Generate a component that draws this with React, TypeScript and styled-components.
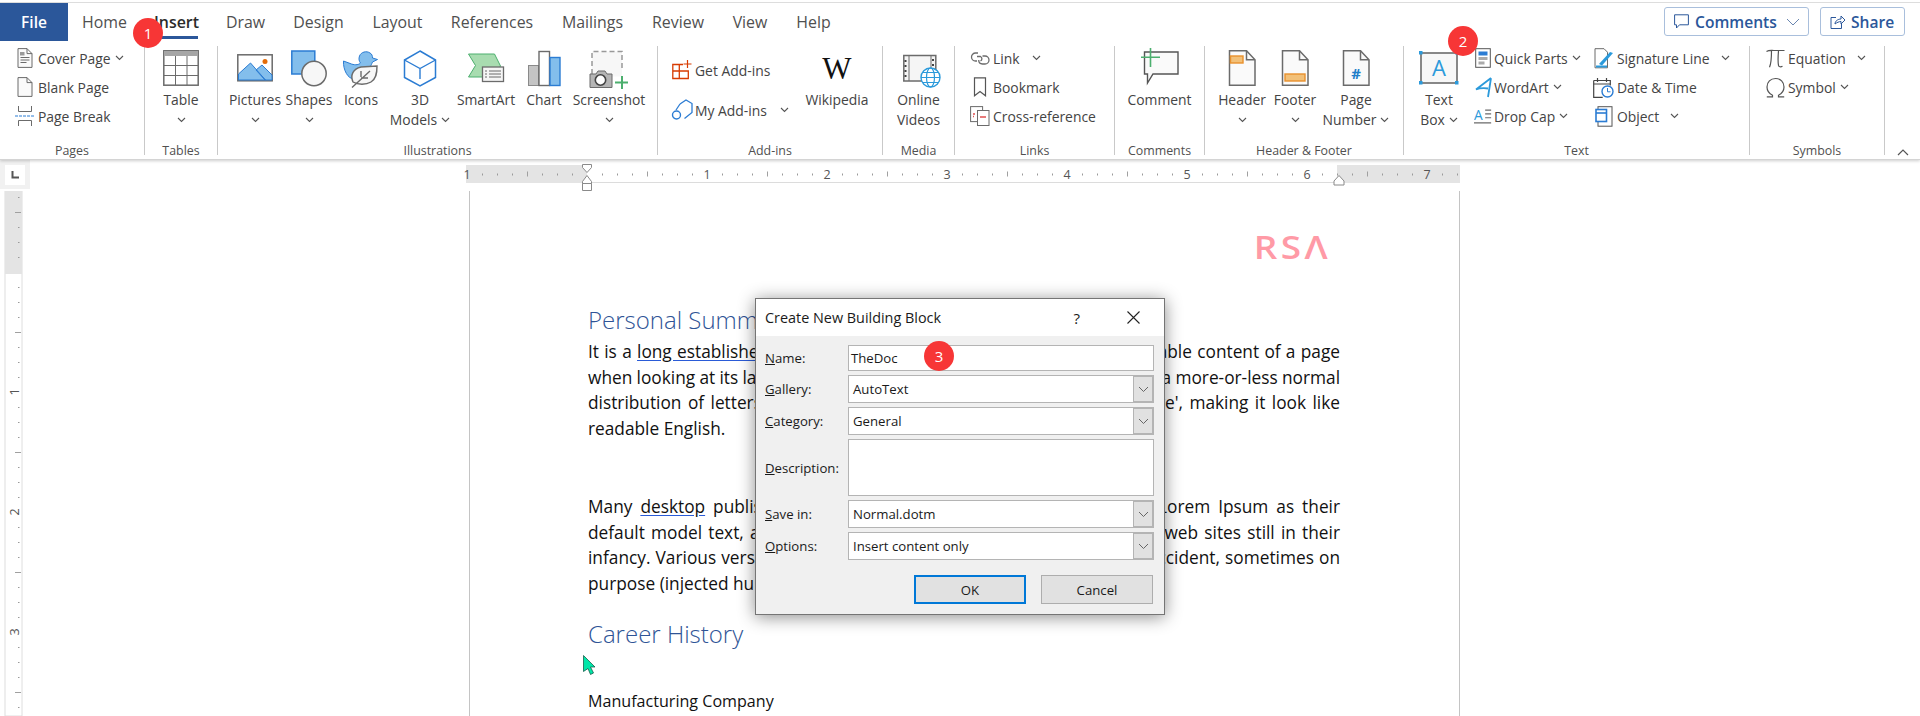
import React from 'react';
import styled, { createGlobalStyle } from 'styled-components';

const GRAY = '#6b6b6b';
const BLUE = '#2b7cd3';
const SKY = '#83beec';
const GREEN = '#4caf6e';
const ORANGE = '#e8912d';

const GlobalStyle = createGlobalStyle`
  html, body {
    margin: 0;
    padding: 0;
    background: #fff;
    overflow: hidden;
  }
  * { box-sizing: border-box; }
`;

const Chevron = ({ ml = 4 }: { ml?: number }) => (
  <ChevronSvg $ml={ml} width="9" height="6" viewBox="0 0 9 6">
    <path d="M1 1l3.5 3.5L8 1" fill="none" stroke="#555" strokeWidth="1.1" />
  </ChevronSvg>
);

const PageSvg = ({ children }: { children?: React.ReactNode }) => (
  <svg width="36" height="36" viewBox="0 0 36 36">
    <path d="M5.5.8h17l8.5 9v25.4H5.5z" fill="#fafafa" stroke={GRAY} strokeWidth="1.5" />
    <path d="M22.5.8v9H31" fill="none" stroke={GRAY} strokeWidth="1.5" />
    {children}
  </svg>
);

const icons: Record<string, React.ReactNode> = {
  cover: (
    <svg width="16" height="20" viewBox="0 0 16 20">
      <path d="M1 .6h9l5 5v13.8H1z" fill="#fafafa" stroke={GRAY} />
      <path d="M10 .6v5h5" fill="none" stroke={GRAY} />
      <path d="M3.5 9.5h9M3.5 12h9M3.5 14.5h6" stroke={GRAY} />
      <rect x="3" y="4" width="4.5" height="3.5" fill="#999" />
    </svg>
  ),
  blank: (
    <svg width="16" height="20" viewBox="0 0 16 20">
      <path d="M1 .6h9l5 5v13.8H1z" fill="#fafafa" stroke={GRAY} />
      <path d="M10 .6v5h5" fill="none" stroke={GRAY} />
    </svg>
  ),
  pagebreak: (
    <svg width="20" height="20" viewBox="0 0 20 20">
      <path d="M3.5 0v5.5h13V0M3.5 20v-5.5h13V20" fill="none" stroke={GRAY} />
      <path d="M0 10h20" stroke={BLUE} strokeDasharray="3 1" />
    </svg>
  ),
  table: (
    <svg width="36" height="36" viewBox="0 0 36 36">
      <rect x=".8" y=".8" width="34.4" height="34.4" fill="#fff" stroke={GRAY} strokeWidth="1.5" />
      <rect x="1" y="1" width="34" height="5" fill="#a6a6a6" />
      <path d="M12.5 6v29M24 6v29M1 15.5h34M1 25.5h34" stroke={GRAY} />
    </svg>
  ),
  pictures: (
    <svg width="36" height="36" viewBox="0 0 36 36">
      <rect x=".8" y="4.8" width="34.4" height="26" fill="#fff" stroke={GRAY} strokeWidth="1.5" />
      <path d="M1.5 24l12-11 15 17H1.5zM19 20l6-5 10 10v5h-7z" fill={SKY} stroke={BLUE} />
      <circle cx="28" cy="11.5" r="2.5" fill="#e36c0a" />
    </svg>
  ),
  shapes: (
    <svg width="36" height="37" viewBox="0 0 36 37">
      <rect x=".8" y="1" width="23" height="23" fill={SKY} stroke={BLUE} strokeWidth="1.5" />
      <circle cx="23" cy="23.5" r="12.2" fill="#f7f7f7" stroke={GRAY} strokeWidth="1.5" />
    </svg>
  ),
  duck: (
    <svg width="36" height="38" viewBox="0 0 36 38">
      <path
        d="M.5 11l8 3c4 1.5 8 .5 9-1-1.5-2-2-4-1-7 1.5-4 7-5.5 10.5-3 2 1 2.5 3 2.500 5l5 1.500-5 2.500c-1 2-1 3-2.500 5L11 29C5 29 0 20 .5 11z"
        fill={SKY}
        stroke={BLUE}
      />
      <path d="M10 32c-3-7 0-13 8-15l16-1c0 8-1 13-6 16-5 3-13 3-18 0z" fill="#f7f7f7" stroke={GRAY} strokeWidth="1.4" />
      <path d="M9 37.5L27 21M18 27v-6M18 28h7" fill="none" stroke={GRAY} strokeWidth="1.4" />
    </svg>
  ),
  cube: (
    <svg width="36" height="37" viewBox="0 0 36 37">
      <path d="M18 1l15.5 9v17.5L18 36 2.5 27.5V10z" fill="#fff" stroke={BLUE} strokeWidth="1.5" />
      <path d="M2.5 10L18 18.5 33.5 10M18 18.5V29" fill="none" stroke={BLUE} strokeWidth="1.4" />
    </svg>
  ),
  smartart: (
    <svg width="36" height="34" viewBox="0 0 36 34">
      <path d="M.5 4h26l6 12-6 11H.5l7-11.5z" fill="#a8dcb0" stroke={GREEN} />
      <rect x="14.5" y="17" width="21" height="14.5" fill="#f5f5f5" stroke={GRAY} strokeWidth="1.3" />
      <path d="M17 21h2M21 21h12M17 24h2M21 24h12M17 27h2M21 27h12" stroke={GRAY} />
    </svg>
  ),
  chart: (
    <svg width="36" height="36" viewBox="0 0 36 36">
      <rect x="2.5" y="15.5" width="10" height="20" fill="#c4c4c4" stroke="#8a8a8a" />
      <rect x="13" y="1.5" width="10.5" height="34" fill="#fff" stroke={GRAY} strokeWidth="1.4" />
      <rect x="24" y="7.5" width="10" height="28" fill={SKY} stroke={BLUE} strokeWidth="1.4" />
    </svg>
  ),
  screenshot: (
    <svg width="40" height="38" viewBox="0 0 40 38">
      <rect x="3" y="1.5" width="30" height="25" fill="#f7f7f7" />
      <path d="M3 24V1.5h30V21" fill="none" stroke="#999" strokeWidth="1.5" strokeDasharray="5 3" />
      <path d="M1 24h6l2-3h7l2 3h5v13.5H1z" fill="#b5b5b5" stroke={GRAY} />
      <circle cx="11.5" cy="30" r="5.2" fill="#fff" stroke="#444" strokeWidth="1.6" />
      <path d="M33 26v13M26 32.5h13" stroke={GREEN} strokeWidth="2" />
    </svg>
  ),
  getaddins: (
    <svg width="20" height="20" viewBox="0 0 20 20">
      <path d="M.8 4.5h6.5V11H.8zM.8 11h6.5v7.5H.8zM7.3 11h9v7.5h-9zM7.3 11V4.5H11" fill="#fff" stroke="#d83b01" strokeWidth="1.3" />
      <path d="M15.5 0v8M11.5 4h8" stroke="#d83b01" strokeWidth="1.2" />
    </svg>
  ),
  myaddins: (
    <svg width="22" height="22" viewBox="0 0 22 22">
      <path d="M9 5l6-4 6 3.5v9l-7.5 6" fill="none" stroke={BLUE} strokeWidth="1.3" />
      <path d="M9 5L5 11" stroke={BLUE} strokeWidth="1.3" />
      <circle cx="5.5" cy="16" r="4" fill="#fff" stroke={BLUE} strokeWidth="1.4" />
    </svg>
  ),
  videos: (
    <svg width="40" height="38" viewBox="0 0 40 38">
      <rect x="4.8" y="5.5" width="32" height="25.5" fill="#f5f5f5" stroke={GRAY} strokeWidth="1.5" />
      <path d="M10 6v25M32 6v18" stroke={GRAY} strokeWidth="1" />
      <path d="M6.5 10v18M34 9v10" stroke="#444" strokeWidth="2" strokeDasharray="2 3" />
      <circle cx="31.5" cy="27.5" r="9.5" fill="#fff" stroke="#2b9adb" strokeWidth="1.4" />
      <ellipse cx="31.5" cy="27.5" rx="4" ry="9.5" fill="none" stroke="#2b9adb" strokeWidth="1.2" />
      <path d="M22 27.5h19M23.5 22.5h16M23.5 32.5h16" stroke="#2b9adb" strokeWidth="1.2" />
    </svg>
  ),
  link: (
    <svg width="21" height="16" viewBox="0 0 21 16">
      <path d="M8 3H5.5a4 4 0 0 0 0 8H7M7 6.500h3.500a2.500 2.500 0 0 1 0 4.500M12.500 6H15a4 4 0 0 1 0 8h-2.500a4 4 0 0 1-3.800-4" fill="none" stroke={GRAY} strokeWidth="1.3" />
    </svg>
  ),
  bookmark: (
    <svg width="14" height="20" viewBox="0 0 14 20">
      <path d="M1.5.8h11v18L7 14.5l-5.500 4.300z" fill="#fff" stroke="#555" strokeWidth="1.2" />
    </svg>
  ),
  crossref: (
    <svg width="20" height="20" viewBox="0 0 20 20">
      <rect x=".6" y=".6" width="12" height="15" fill="#fff" stroke={GRAY} />
      <rect x="7.5" y="4.5" width="11.5" height="15" fill="#fff" stroke={GRAY} />
      <path d="M3 8h2M3 10.500h1M10 11h6" stroke="#e05050" strokeWidth="1.4" />
    </svg>
  ),
  comment: (
    <svg width="40" height="38" viewBox="0 0 40 38">
      <path d="M4.5 2H38v22H13l-5.500 9v-9h-3z" fill="#fafafa" stroke="#555" strokeWidth="1.4" />
      <path d="M10.5-2v19M1 7.300h19" stroke={GREEN} strokeWidth="1.6" />
    </svg>
  ),
  header: (
    <PageSvg>
      <rect x="6.5" y="6" width="12.5" height="7" fill="#f2c078" stroke={ORANGE} strokeWidth="1.4" />
    </PageSvg>
  ),
  footer: (
    <PageSvg>
      <rect x="8" y="24" width="20" height="7" fill="#f2c078" stroke={ORANGE} strokeWidth="1.4" />
    </PageSvg>
  ),
  pagenumber: (
    <PageSvg>
      <text x="18" y="29" textAnchor="middle" fontFamily="'Open Sans', sans-serif" fontWeight="700" fontSize="15" fill="#1f7ec9">#</text>
    </PageSvg>
  ),
  textbox: (
    <svg width="42" height="36" viewBox="0 0 42 36">
      <rect x="3" y="3" width="36" height="30" fill="#f7f7f7" stroke={GRAY} strokeWidth="1.6" />
      <rect x="1" y="1" width="3.5" height="3.5" fill="#2b9adb" />
      <rect x="37" y="1" width="3.5" height="3.5" fill="#2b9adb" />
      <rect x="1" y="31" width="3.5" height="3.5" fill="#2b9adb" />
      <rect x="37" y="31" width="3.5" height="3.5" fill="#2b9adb" />
      <text x="21" y="26" textAnchor="middle" fontFamily="'Open Sans', sans-serif" fontSize="22" fill="#2b9adb">A</text>
    </svg>
  ),
  quickparts: (
    <svg width="16" height="20" viewBox="0 0 16 20">
      <rect x=".7" y=".7" width="14.6" height="18.6" fill="#fff" stroke="#555" />
      <rect x="3.5" y="3.5" width="9" height="4" fill={BLUE} />
      <rect x="3.5" y="9" width="9" height="3" fill="#aaa" />
      <rect x="3.5" y="13.5" width="6" height="3" fill="#aaa" />
    </svg>
  ),
  wordart: (
    <svg width="17" height="21" viewBox="0 0 17 21">
      <path d="M16 1L1 12.500c4-1.500 8-1.500 12-1M16 1l-3 19" fill="none" stroke="#2b9adb" strokeWidth="1.8" />
    </svg>
  ),
  dropcap: (
    <svg width="21" height="19" viewBox="0 0 21 19">
      <text x="0" y="13" fontFamily="'Open Sans', sans-serif" fontSize="16" fill="#2b9adb">A</text>
      <path d="M13 2h7M13 6.500h7M13 11h7M0 17h20" stroke={GRAY} strokeWidth="1.3" />
    </svg>
  ),
  signature: (
    <svg width="20" height="21" viewBox="0 0 20 21">
      <path d="M1 .7h9l3.500 3.500v15.600H1z" fill="#fff" stroke={GRAY} />
      <path d="M5 16L16 4l3 1-11 12.500z" fill="#2b9adb" />
      <path d="M2 18.500h11" stroke="#2b9adb" strokeWidth="2" />
    </svg>
  ),
  datetime: (
    <svg width="21" height="21" viewBox="0 0 21 21">
      <path d="M.7 3.500h16.600v5M.7 3.500v16.800h9" fill="none" stroke="#444" strokeWidth="1.2" />
      <path d="M.7 7h16.600M4.500 1v4M13.500 1v4" stroke="#444" strokeWidth="1.2" />
      <circle cx="14.5" cy="14.5" r="5.5" fill="#fff" stroke={BLUE} strokeWidth="1.4" />
      <path d="M14.5 11v3.800h3" fill="none" stroke={BLUE} />
    </svg>
  ),
  object: (
    <svg width="18" height="21" viewBox="0 0 18 21">
      <rect x="3" y=".7" width="14" height="19.5" fill="#fff" stroke="#555" />
      <rect x="1" y="3.5" width="10.5" height="12" fill="#fff" stroke={BLUE} strokeWidth="1.6" />
      <path d="M1 7h10.500" stroke={BLUE} strokeWidth="1.6" />
    </svg>
  ),
  equation: (
    <svg width="19" height="19" viewBox="0 0 19 19">
      <path d="M.5 2.500C3 1 5 1.500 8 1.500h10.500M5.500 1.800c0 6 0 12-2 16.500M12.500 1.800c-.5 6-.5 12 0 14.500.3 1.500 2 2 4 1" fill="none" stroke="#555" strokeWidth="1.2" />
    </svg>
  ),
  symbol: (
    <svg width="19" height="21" viewBox="0 0 19 21">
      <path d="M.8 19.800h5.700v-1.500C3 16.500 1 13.500 1 10c0-5 3.500-8.500 8.500-8.500S18 5 18 10c0 3.500-2 6.500-5.500 8.300v1.500h5.700" fill="none" stroke="#555" strokeWidth="1.2" />
    </svg>
  ),
};

const Root = styled.div`
  position: relative;
  width: 1920px;
  height: 716px;
  overflow: hidden;
  background: #fff;
  font-family: 'Open Sans', 'Noto Sans', sans-serif;
`;

const TopStrip = styled.div`
  height: 3px;
  background: #fff;
  border-bottom: 1px solid #dddddd;
`;

const Ribbon = styled.header`
  position: relative;
  z-index: 2;
  height: 160px;
  background: #fff;
  border-bottom: 1px solid #d4d4d4;
  box-shadow: 0 1px 3px rgba(0, 0, 0, 0.2);
`;

const TabRow = styled.nav`
  display: flex;
  align-items: flex-start;
  height: 38px;
`;

const FileTab = styled.div`
  width: 68px;
  height: 38px;
  margin-right: 14px;
  background: #2b579a;
  color: #fff;
  font-size: 15.5px;
  font-weight: 600;
  line-height: 38px;
  text-align: center;
`;

const Tab = styled.div<{ $active?: boolean; $w: number }>`
  display: flex;
  justify-content: center;
  width: ${(p) => p.$w}px;
  margin-right: 28px;
  height: 36px;
  color: ${(p) => (p.$active ? '#2b2b2b' : '#505050')};
  font-size: 15.9px;
  font-weight: ${(p) => (p.$active ? 600 : 400)};
  line-height: 38px;
  white-space: nowrap;
  border-bottom: ${(p) => (p.$active ? '3px solid #2b579a' : 'none')};
`;

const TabActions = styled.div`
  display: flex;
  gap: 11px;
  margin: 4px 15px 0 auto;
`;

const ActionButton = styled.div<{ $w: number }>`
  display: flex;
  align-items: center;
  gap: 6px;
  width: ${(p) => p.$w}px;
  height: 29px;
  padding-left: 9px;
  border: 1px solid #a9bfdc;
  border-radius: 3px;
  color: #2b579a;
  font-size: 15.6px;
  font-weight: 600;
`;

const ActionCaret = styled.svg`
  margin-left: auto;
  margin-right: 8px;
`;

const GroupRow = styled.div`
  display: flex;
  align-items: flex-start;
  height: 118px;
  padding-top: 5px;
`;

const Group = styled.section<{ $w: number }>`
  display: flex;
  flex-direction: column;
  flex: none;
  width: ${(p) => p.$w}px;
  height: 109px;
  border-right: 1px solid #c9c9c9;
`;

const GroupBody = styled.div<{ $pad?: number }>`
  display: flex;
  height: 94px;
  padding-left: ${(p) => p.$pad ?? 0}px;
`;

const GroupLabel = styled.div`
  height: 15px;
  color: #505050;
  font-size: 12.4px;
  line-height: 22px;
  text-align: center;
`;

const Large = styled.div<{ $w: number }>`
  display: flex;
  flex-direction: column;
  align-items: center;
  flex: none;
  width: ${(p) => p.$w}px;
  color: #444;
  font-size: 13.9px;
  line-height: 20px;
  white-space: nowrap;
`;

const LargeIcon = styled.div`
  display: flex;
  justify-content: center;
  align-items: flex-start;
  height: 36px;
  margin: 4px 0;
  svg { flex: none; overflow: visible; }
`;

const LargeLine = styled.div`
  display: flex;
  align-items: center;
  height: 20px;
`;

const ChevronSvg = styled.svg<{ $ml: number }>`
  flex: none;
  margin-left: ${(p) => p.$ml}px;
`;

const RowStack = styled.div<{ $w: number; $gap?: number; $top?: number }>`
  display: flex;
  flex-direction: column;
  flex: none;
  gap: ${(p) => p.$gap ?? 3}px;
  width: ${(p) => p.$w}px;
  margin-top: -1px;
  padding-top: ${(p) => p.$top ?? 0}px;
`;

const SmallRow = styled.div`
  display: flex;
  align-items: center;
  height: 26px;
  color: #444;
  font-size: 13.9px;
  white-space: nowrap;
`;

const SmallIcon = styled.span<{ $w?: number }>`
  display: flex;
  justify-content: center;
  align-items: center;
  flex: none;
  width: ${(p) => p.$w ?? 22}px;
  margin-right: 2px;
`;

const Wiki = styled.div`
  height: 36px;
  margin: 5px 0 3px;
  color: #111;
  font-family: 'Liberation Serif', serif;
  font-size: 31px;
  line-height: 36px;
`;

const Collapse = styled.svg`
  align-self: flex-end;
  flex: none;
  margin: 0 0 3px 12px;
`;

const RulerRow = styled.div`
  display: flex;
  height: 31px;
`;

const Corner = styled.div`
  display: flex;
  align-items: center;
  justify-content: center;
  width: 30px;
  height: 29px;
  background: #f1f1f1;
`;

const CornerBox = styled.div`
  display: flex;
  align-items: center;
  justify-content: center;
  width: 20px;
  height: 20px;
  background: #fff;
`;

const HorizontalRuler = styled.svg`
  flex: none;
  margin-left: 432px;
`;

const Workspace = styled.div`
  display: flex;
  height: 525px;
`;

const VerticalRuler = styled.svg`
  flex: none;
  margin-left: 4px;
`;

const Page = styled.main`
  flex: none;
  width: 991px;
  margin-left: 441px;
  padding: 0 119px 0 118px;
  border-left: 1px solid #c4c4c4;
  border-right: 1px solid #c4c4c4;
  color: #111;
  font-size: 17.3px;
  line-height: 25.5px;
`;

const LogoRow = styled.div`
  height: 73px;
  padding: 35px 8px 0 0;
  color: #ff9aa6;
  font-size: 33px;
  font-weight: 600;
  letter-spacing: 3px;
  line-height: 42px;
  text-align: right;
  transform: scaleX(1.12);
  transform-origin: 752px 0;
`;

const Heading = styled.h2<{ $mt: number }>`
  margin: ${(p) => p.$mt}px 0 0;
  color: #2f5496;
  font-size: 24px;
  font-weight: 300;
  line-height: 32px;
`;

const Paragraph = styled.div<{ $mt: number }>`
  margin-top: ${(p) => p.$mt}px;
`;

const Line = styled.div<{ $last?: boolean }>`
  height: 25.5px;
  text-align: justify;
  text-align-last: ${(p) => (p.$last ? 'left' : 'justify')};
  white-space: nowrap;
  word-spacing: ${(p) => (p.$last ? 0 : -2.5)}px;
`;

const Proofed = styled.span`
  text-decoration: underline;
  text-decoration-color: #2a5bd7;
  text-underline-offset: 2px;
`;

const Company = styled.div`
  margin-top: 39px;
  font-size: 16.1px;
  line-height: 24px;
`;

const Dialog = styled.div`
  position: absolute;
  z-index: 3;
  left: 755px;
  top: 298px;
  width: 410px;
  height: 317px;
  border: 1px solid #757575;
  background: #f0f0f0;
  box-shadow: 0 2px 16px rgba(0, 0, 0, 0.45);
  color: #1a1a1a;
  font-size: 13.2px;
`;

const DialogTitle = styled.div`
  display: flex;
  align-items: center;
  height: 37px;
  padding: 0 24px 0 9px;
  background: #fff;
  font-size: 14.4px;
`;

const Help = styled.span`
  margin-left: auto;
  margin-right: 47px;
  font-size: 15px;
`;

const Form = styled.div`
  display: flex;
  flex-direction: column;
  gap: 4px;
  padding: 9px 10px 0 9px;
`;

const FormRow = styled.div<{ $h: number }>`
  display: flex;
  align-items: center;
  height: ${(p) => p.$h}px;
`;

const FieldLabel = styled.label`
  flex: none;
  width: 83px;
`;

const Field = styled.div`
  display: flex;
  align-items: center;
  flex: 1;
  height: 100%;
  padding-left: 2px;
  background: #fff;
  border: 1px solid #b4b4b4;
`;

const SelectBox = styled.div`
  display: flex;
  align-items: center;
  flex: 1;
  height: 100%;
  padding-left: 4px;
  background: #fff;
  border: 1px solid #b4b4b4;
`;

const SelectArrow = styled.div`
  display: flex;
  align-items: center;
  justify-content: center;
  flex: none;
  width: 21px;
  height: calc(100% + 2px);
  margin: 0 -1px 0 auto;
  background: #e1e1e1;
  border: 1px solid #b4b4b4;
  border-width: 2px 2px 2px 1px;
`;

const DialogFooter = styled.div`
  display: flex;
  gap: 15px;
  margin-top: 15px;
  padding-left: 158px;
`;

const DialogButton = styled.div<{ $primary?: boolean }>`
  display: flex;
  align-items: center;
  justify-content: center;
  width: 112px;
  height: 29px;
  background: #e1e1e1;
  border: ${(p) => (p.$primary ? '2px solid #0078d7' : '1px solid #adadad')};
`;

const Badge = styled.div<{ $x: number; $y: number }>`
  position: absolute;
  z-index: 4;
  left: ${(p) => p.$x - 15}px;
  top: ${(p) => p.$y - 15}px;
  width: 30px;
  height: 30px;
  border-radius: 50%;
  background: #f73636;
  color: #fff;
  font-size: 15px;
  line-height: 30px;
  text-align: center;
`;

const Cursor = styled.svg`
  position: absolute;
  z-index: 1;
  left: 583px;
  top: 655px;
`;

type BigProps = { w: number; icon: string; lines: string[]; chev?: boolean };

const Big = ({ w, icon, lines, chev }: BigProps) => (
  <Large $w={w}>
    <LargeIcon>{icons[icon]}</LargeIcon>
    <LargeLine>{lines[0]}</LargeLine>
    {lines[1] ? (
      <LargeLine>
        {lines[1]}
        {chev && <Chevron />}
      </LargeLine>
    ) : (
      chev && (
        <LargeLine>
          <Chevron ml={0} />
        </LargeLine>
      )
    )}
  </Large>
);

const Small = ({ icon, text, chev, iw }: { icon: string; text: string; chev?: number; iw?: number }) => (
  <SmallRow>
    <SmallIcon $w={iw}>{icons[icon]}</SmallIcon>
    {text}
    {chev !== undefined && <Chevron ml={chev} />}
  </SmallRow>
);

const TopRuler = () => {
  const ticks: React.ReactNode[] = [];
  // zero of the ruler sits at x=587 on screen, the svg starts at x=462
  for (let i = -8; i <= 58; i++) {
    const x = 125 + i * 15;
    if (x < 8 || x > 996) continue;
    if (i % 8 === 0) continue;
    if (i % 4 === 0) ticks.push(<rect key={i} x={x} y={11.5} width={1} height={5} fill="#a0a0a0" />);
    else ticks.push(<rect key={i} x={x} y={13.5} width={1} height={2} fill="#9a9a9a" />);
  }
  const nums = [-1, 1, 2, 3, 4, 5, 6, 7];
  return (
    <HorizontalRuler width="1000" height="31" viewBox="0 0 1000 31">
      <rect x="4" y="5" width="994" height="18" fill="#fff" />
      <rect x="4" y="5" width="121" height="18" fill="#e4e4e4" />
      <rect x="875" y="5" width="123" height="18" fill="#e4e4e4" />
      <rect x="125" y="22" width="750" height="1" fill="#dcdcdc" />
      {ticks}
      {nums.map((n) => (
        <text key={n} x={125 + n * 120} y="19" textAnchor="middle" fontSize="12.5" fill="#555" fontFamily="'Open Sans', sans-serif">
          {Math.abs(n)}
        </text>
      ))}
      <path d="M120.5 4.5h9v3l-4.500 5-4.500-5zM120.5 21.5l4.500-6 4.500 6v2h-9zM120.5 23.5h9v7h-9z" fill="#fff" stroke="#8a8a8a" />
      <path d="M872 21l5-5.500 5 5.500v4h-10z" fill="#fff" stroke="#8a8a8a" />
    </HorizontalRuler>
  );
};

const SideRuler = () => {
  const ticks: React.ReactNode[] = [];
  for (let i = 0; i < 36; i++) {
    const y = 6 + i * 15;
    const fromZero = i - 5;
    if (fromZero % 8 === 0 && fromZero !== -8) continue;
    if (((fromZero % 4) + 4) % 4 === 0) ticks.push(<rect key={i} x={11} y={y} width={6} height={1} fill="#a0a0a0" />);
    else ticks.push(<rect key={i} x={14} y={y} width={1.5} height={1} fill="#9a9a9a" />);
  }
  return (
    <VerticalRuler width="24" height="525" viewBox="0 0 24 525">
      <rect x="1" y="0" width="17" height="525" fill="#fff" stroke="#dedede" />
      <rect x="1" y="0" width="17" height="83" fill="#e4e4e4" />
      {ticks}
      {[1, 2, 3].map((n) => (
        <text key={n} x="0" y="0" textAnchor="middle" fontSize="12.5" fill="#555" fontFamily="'Open Sans', sans-serif" transform={`translate(14.5 ${81 + n * 120}) rotate(-90)`}>
          {n}
        </text>
      ))}
    </VerticalRuler>
  );
};

const Combo = ({ label, rest, value }: { label: string; rest: string; value: string }) => (
  <FormRow $h={28}>
    <FieldLabel>
      <u>{label}</u>
      {rest}
    </FieldLabel>
    <SelectBox>
      {value}
      <SelectArrow>
        <svg width="11" height="7" viewBox="0 0 11 7">
          <path d="M1 1l4.5 4.5L10 1" fill="none" stroke="#666" />
        </svg>
      </SelectArrow>
    </SelectBox>
  </FormRow>
);

const App = () => {
  return (
    <Root>
      <GlobalStyle />
      <Ribbon>
        <TopStrip />
        <TabRow>
          <FileTab>File</FileTab>
          <Tab $w={45}>Home</Tab>
          <Tab $w={43} $active>Insert</Tab>
          <Tab $w={39}>Draw</Tab>
          <Tab $w={51}>Design</Tab>
          <Tab $w={51}>Layout</Tab>
          <Tab $w={82}>References</Tab>
          <Tab $w={63}>Mailings</Tab>
          <Tab $w={52}>Review</Tab>
          <Tab $w={36}>View</Tab>
          <Tab $w={35}>Help</Tab>
          <TabActions>
            <ActionButton $w={145}>
              <svg width="15" height="15" viewBox="0 0 15 15">
                <path d="M.6.8h13.8v10H5.5L2.500 14v-3.200H.6z" fill="none" stroke="#2b579a" />
              </svg>
              Comments
              <ActionCaret width="14" height="8" viewBox="0 0 14 8">
                <path d="M1 1l6 6 6-6" fill="none" stroke="#6a86b0" />
              </ActionCaret>
            </ActionButton>
            <ActionButton $w={85}>
              <svg width="15" height="15" viewBox="0 0 15 15">
                <path d="M6 3.5H1v11h10.500V10" fill="none" stroke="#2b579a" />
                <path d="M5 10c0-3 3-5 6-5V2l4 4-4 4V7.500c-2 0-4 1-6 2.500z" fill="none" stroke="#2b579a" />
              </svg>
              Share
            </ActionButton>
          </TabActions>
        </TabRow>
        <GroupRow>
          <Group $w={145}>
            <GroupBody $pad={14}>
              <RowStack $w={130}>
                <Small icon="cover" text="Cover Page" chev={4} />
                <Small icon="blank" text="Blank Page" />
                <Small icon="pagebreak" text="Page Break" />
              </RowStack>
            </GroupBody>
            <GroupLabel>Pages</GroupLabel>
          </Group>
          <Group $w={73}>
            <GroupBody>
              <Big w={72} icon="table" lines={['Table']} chev />
            </GroupBody>
            <GroupLabel>Tables</GroupLabel>
          </Group>
          <Group $w={440}>
            <GroupBody $pad={10}>
              <Big w={54} icon="pictures" lines={['Pictures']} chev />
              <Big w={54} icon="shapes" lines={['Shapes']} chev />
              <Big w={50} icon="duck" lines={['Icons']} />
              <Big w={68} icon="cube" lines={['3D', 'Models']} chev />
              <Big w={64} icon="smartart" lines={['SmartArt']} />
              <Big w={52} icon="chart" lines={['Chart']} />
              <Big w={78} icon="screenshot" lines={['Screenshot']} chev />
            </GroupBody>
            <GroupLabel>Illustrations</GroupLabel>
          </Group>
          <Group $w={225}>
            <GroupBody $pad={13}>
              <RowStack $w={129} $gap={14} $top={12}>
                <Small icon="getaddins" text="Get Add-ins" />
                <Small icon="myaddins" text="My Add-ins" chev={13} />
              </RowStack>
              <Large $w={74}>
                <Wiki>W</Wiki>
                <LargeLine>Wikipedia</LargeLine>
              </Large>
            </GroupBody>
            <GroupLabel>Add-ins</GroupLabel>
          </Group>
          <Group $w={72}>
            <GroupBody>
              <Big w={71} icon="videos" lines={['Online', 'Videos']} />
            </GroupBody>
            <GroupLabel>Media</GroupLabel>
          </Group>
          <Group $w={160}>
            <GroupBody $pad={14}>
              <RowStack $w={144}>
                <Small icon="link" text="Link" chev={12} />
                <Small icon="bookmark" text="Bookmark" />
                <Small icon="crossref" text="Cross-reference" />
              </RowStack>
            </GroupBody>
            <GroupLabel>Links</GroupLabel>
          </Group>
          <Group $w={90}>
            <GroupBody>
              <Big w={89} icon="comment" lines={['Comment']} />
            </GroupBody>
            <GroupLabel>Comments</GroupLabel>
          </Group>
          <Group $w={199}>
            <GroupBody $pad={9}>
              <Big w={56} icon="header" lines={['Header']} chev />
              <Big w={50} icon="footer" lines={['Footer']} chev />
              <Big w={72} icon="pagenumber" lines={['Page', 'Number']} chev />
            </GroupBody>
            <GroupLabel>Header &amp; Footer</GroupLabel>
          </Group>
          <Group $w={346}>
            <GroupBody>
              <Big w={70} icon="textbox" lines={['Text', 'Box']} chev />
              <RowStack $w={118}>
                <Small icon="quickparts" iw={18} text="Quick Parts" chev={4} />
                <Small icon="wordart" iw={18} text="WordArt" chev={4} />
                <Small icon="dropcap" iw={18} text="Drop Cap" chev={4} />
              </RowStack>
              <RowStack $w={150}>
                <Small icon="signature" iw={23} text="Signature Line" chev={11} />
                <Small icon="datetime" iw={23} text="Date & Time" />
                <Small icon="object" iw={23} text="Object" chev={11} />
              </RowStack>
            </GroupBody>
            <GroupLabel>Text</GroupLabel>
          </Group>
          <Group $w={135}>
            <GroupBody $pad={14}>
              <RowStack $w={118}>
                <Small icon="equation" text="Equation" chev={11} />
                <Small icon="symbol" text="Symbol" chev={4} />
              </RowStack>
            </GroupBody>
            <GroupLabel>Symbols</GroupLabel>
          </Group>
          <Collapse width="12" height="8" viewBox="0 0 12 8">
            <path d="M1 7l5-5 5 5" fill="none" stroke="#555" strokeWidth="1.2" />
          </Collapse>
        </GroupRow>
      </Ribbon>

      <RulerRow>
        <Corner>
          <CornerBox>
            <svg width="8" height="8" viewBox="0 0 8 8">
              <path d="M1.5 0v6.500H8" fill="none" stroke="#555" strokeWidth="2" />
            </svg>
          </CornerBox>
        </Corner>
        <TopRuler />
      </RulerRow>

      <Workspace>
        <SideRuler />
        <Page>
          <LogoRow>RSΛ</LogoRow>
          <Heading $mt={40}>Personal Summary</Heading>
          <Paragraph $mt={3}>
            <Line>It is a <Proofed>long established</Proofed> fact that a reader will be distracted by the readable content of a page</Line>
            <Line>when looking at its layout. The point of using Lorem Ipsum is that it has a more-or-less normal</Line>
            <Line>distribution of letters, as opposed to using 'Content here, content here', making it look like</Line>
            <Line $last>readable English.</Line>
          </Paragraph>
          <Paragraph $mt={53}>
            <Line>Many <Proofed>desktop</Proofed> publishing packages and web page editors now use Lorem Ipsum as their</Line>
            <Line>default model text, and a search for 'lorem ipsum' will uncover many web sites still in their</Line>
            <Line>infancy. Various versions have evolved over the years, sometimes by accident, sometimes on</Line>
            <Line $last>purpose (injected humour and the like).</Line>
          </Paragraph>
          <Heading $mt={22}>Career History</Heading>
          <Company>Manufacturing Company</Company>
        </Page>
      </Workspace>

      <Cursor width="14" height="20" viewBox="0 0 14 20">
        <path d="M.5.5L12 12H7.500l3 6-3 1.500-2.500-6-4.500 3z" fill="#00e6a8" stroke="#0a4a3a" strokeWidth=".7" />
      </Cursor>

      <Dialog>
        <DialogTitle>
          Create New Building Block
          <Help>?</Help>
          <svg width="13" height="13" viewBox="0 0 13 13">
            <path d="M.5.5l12 12M12.500.5l-12 12" stroke="#222" strokeWidth="1.1" />
          </svg>
        </DialogTitle>
        <Form>
          <FormRow $h={26}>
            <FieldLabel><u>N</u>ame:</FieldLabel>
            <Field>TheDoc</Field>
          </FormRow>
          <Combo label="G" rest="allery:" value="AutoText" />
          <Combo label="C" rest="ategory:" value="General" />
          <FormRow $h={57}>
            <FieldLabel><u>D</u>escription:</FieldLabel>
            <Field />
          </FormRow>
          <Combo label="S" rest="ave in:" value="Normal.dotm" />
          <Combo label="O" rest="ptions:" value="Insert content only" />
        </Form>
        <DialogFooter>
          <DialogButton $primary>OK</DialogButton>
          <DialogButton>Cancel</DialogButton>
        </DialogFooter>
      </Dialog>

      <Badge $x={148} $y={33}>1</Badge>
      <Badge $x={1463} $y={41}>2</Badge>
      <Badge $x={939} $y={356}>3</Badge>
    </Root>
  );
};

export default App;
